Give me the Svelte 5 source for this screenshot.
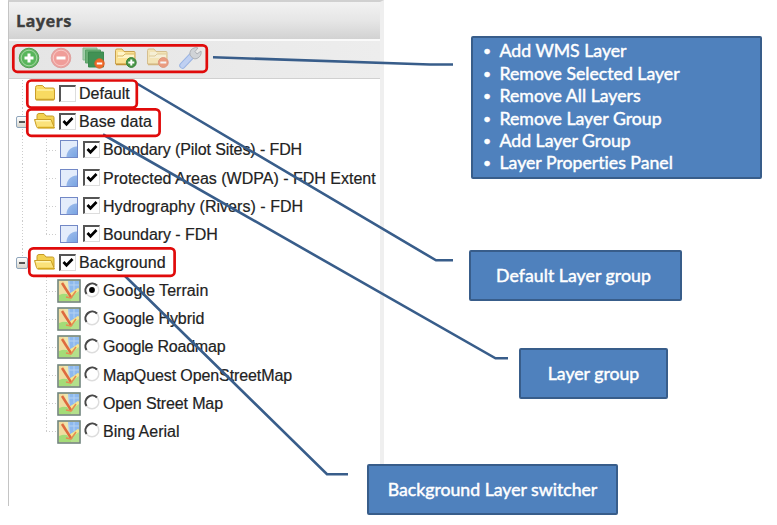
<script>
  const layers = [
    { label: 'Default', kind: 'group', checked: false, spacing: 0 },
    { label: 'Base data', kind: 'group', checked: true, open: true, spacing: 0.1 },
    { label: 'Boundary (Pilot Sites) - FDH', kind: 'layer', checked: true, spacing: -0.1 },
    { label: 'Protected Areas (WDPA) - FDH Extent', kind: 'layer', checked: true, spacing: 0 },
    { label: 'Hydrography (Rivers) - FDH', kind: 'layer', checked: true, spacing: 0.04 },
    { label: 'Boundary - FDH', kind: 'layer', checked: true, last: true, spacing: -0.07 },
    { label: 'Background', kind: 'group', checked: true, open: true, final: true, spacing: 0.15 },
    { label: 'Google Terrain', kind: 'base', checked: true, spacing: 0.05 },
    { label: 'Google Hybrid', kind: 'base', spacing: -0.08 },
    { label: 'Google Roadmap', kind: 'base', spacing: -0.22 },
    { label: 'MapQuest OpenStreetMap', kind: 'base', spacing: -0.1 },
    { label: 'Open Street Map', kind: 'base', spacing: -0.13 },
    { label: 'Bing Aerial', kind: 'base', last: true, spacing: 0 }
  ];
  const tools = ['add', 'remove', 'clear', 'folder-add', 'folder-remove', 'wrench'];
  const actions = ['Add WMS Layer', 'Remove Selected Layer', 'Remove All Layers', 'Remove Layer Group', 'Add Layer Group', 'Layer Properties Panel'];
  const inBackground = (i) => i > 6;
</script>

{#snippet folder(open)}
  <svg class="folder" viewBox="0 0 22 18">
    {#if open}
      <path d="M3 13V3.500Q3 1.500 5 1.500h5l2 2.500h6.500q1.500 0 1.500 1.500V14z" fill="#f3d250" stroke="#c59b28" />
      <path d="M.5 7.500h16.500L20.500 16H4Q3 16 2.500 14.500z" fill="#fbe27a" stroke="#c99d24" />
      <path d="M2 8.700h14.500" stroke="#fff6b8" stroke-width="1.500" />
      <path d="M4 15.500h16" stroke="#d5a91e" stroke-width="1.500" />
    {:else}
      <path d="M1.500 15V3.500Q1.500 1.500 3.500 1.500h5l2.500 2.500h8q1.500 0 1.500 1.500V15q0 1-1.500 1H3q-1.500 0-1.500-1z" fill="#f8da61" stroke="#ca9d2c" />
      <path d="M3 6h16" stroke="#fff0a0" stroke-width="1.500" />
      <path d="M2 15.500h18" stroke="#cba02a" stroke-width="1.500" />
    {/if}
  </svg>
{/snippet}

<main>
  <section class="panel">
    <header>Layers</header>
    <div class="toolbar">
      {#each tools as tool}
        <svg class="tool" viewBox="0 0 24 24">
          {#if tool === 'add' || tool === 'remove'}
            {@const add = tool === 'add'}
            <circle cx="12" cy="12" r="9.800" fill={add ? '#65b765' : '#eda09d'} stroke={add ? '#529d54' : '#dfa19f'} />
            <circle cx="12" cy="12" r="7.800" fill={add ? '#58b65b' : '#f09d99'} stroke={add ? '#a5d6a2' : '#f8c9c5'} />
            <path d={add ? 'M12 7.500v9M7.500 12h9' : 'M7.500 12h9'} stroke="#fff" stroke-width="3" />
          {:else if tool === 'clear'}
            <path d="M1 2h14v12H1z" fill="#a3ceab" stroke="#86b991" />
            <path d="M3.500 4h15v13h-15z" fill="#6aae75" stroke="#5aa067" />
            <path d="M6.500 6h15v15h-15z" fill="#419154" stroke="#3b894d" />
            <circle cx="17.500" cy="17.500" r="4.700" fill="#f26928" stroke="#dc612b" />
            <path d="M14.800 17.500h5.400" stroke="#fff" stroke-width="2" />
          {:else if tool === 'wrench'}
            <path d="M4.500 19.500 14 9.500" stroke="#9ab4e3" stroke-width="6.500" stroke-linecap="round" />
            <path d="M4.500 19.500 13.500 10" stroke="#bfd0f2" stroke-width="4.500" stroke-linecap="round" />
            <path d="M12 9Q11 3 17.500 1.500L20 2l-3 3.500 2 2.500L23 5q1 5-4 7.500-2 1-4.500-.5z" fill="#d0d3d7" stroke="#aeb1b6" />
          {:else}
            {@const add = tool === 'folder-add'}
            <g opacity={add ? 1 : 0.58}>
              <path d="M1.500 18V4.500Q1.500 3 3 3h5l2 2.500h10q1 0 1 1V18z" fill="#fbe294" stroke="#c9a14e" />
              <path d="M4 6h6l2 2h8v4H4z" fill="#fff4c7" />
              <path d="M3 10h6l2-2h9" fill="none" stroke="#d7b662" />
              <path d="M2 18.500h19" stroke="#c49436" stroke-width="1.500" />
              <circle cx="17.300" cy="16.500" r="4.900" fill={add ? '#489547' : '#ed6737'} stroke={add ? '#398238' : '#d65b31'} />
              <path d={add ? 'M17.300 13.500v6M14.300 16.500h6' : 'M14.300 16.500h6'} stroke="#fff" stroke-width="2" />
            </g>
          {/if}
        </svg>
      {/each}
    </div>
    <div class="tree">
      {#each layers as item, i}
        <div class="row {item.kind}">
          <span class="rail" class:hidden={inBackground(i)} class:half={item.final}>
            {#if item.open}<i class="toggle"></i>{/if}
          </span>
          {#if item.kind === 'group'}
            {@render folder(item.open)}
          {:else}
            <span class="branch" class:half={item.last}></span>
            {#if item.kind === 'layer'}
              <i class="polygon"></i>
            {:else}
              <svg class="map" viewBox="0 0 24 24">
                <rect x="1" y="1" width="22" height="22" fill="#eee6ae" />
                <path d="M11 2h11v10l-9 2z" fill="#8db9ee" />
                <path d="M12 2v10M17 2v9M11 6h11" stroke="#b5d2f2" stroke-width="1" />
                <path d="M2 14l8 1 5 7H2z" fill="#a4dc78" />
                <path d="M14 16l8-4v10h-8z" fill="#b4e08b" />
                <path d="M2 2h5l4 11-9 3z" fill="#f0dda0" />
                <path d="M12 17 22 10" stroke="#f5e68f" stroke-width="3" />
                <path d="M5 4 14.500 19" stroke="#de6a3e" stroke-width="2.500" />
                <path d="M19 12 14 19 9 18" fill="none" stroke="#e58b52" stroke-width="1.500" />
                <rect x="1" y="1" width="22" height="22" fill="none" stroke="#71857d" stroke-width="1.600" />
              </svg>
            {/if}
          {/if}
          {#if item.kind === 'base'}
            <svg class="radio" viewBox="0 0 16 16">
              <circle cx="8" cy="8" r="6.800" fill="#fff" stroke="#ddd" stroke-width="1.500" />
              <path d="M2.500 12A6.800 6.800 0 0 1 13 3.500" fill="none" stroke="#484848" stroke-width="2.100" />
              {#if item.checked}<circle cx="8" cy="8" r="2.900" fill="#000" />{/if}
            </svg>
          {:else}
            <span class="check">
              {#if item.checked}<svg viewBox="0 0 12 12"><path d="M1.500 5 4.500 8.200 10.500 2" fill="none" stroke="#000" stroke-width="2.700" /></svg>{/if}
            </span>
          {/if}
          <span class="label" style="letter-spacing: {item.spacing}px">{item.label}</span>
        </div>
      {/each}
    </div>
  </section>

  <svg class="marks" viewBox="0 0 777 525">
    <g fill="none" stroke="#385d8a" stroke-width="2.600">
      <path d="M213 57.300 430 64.500H453" />
      <path d="M136 83 436 260.300H453" />
      <path d="M103 134.500 495.500 358.300H508" />
      <path d="M125 276 327 474.300H348" />
    </g>
    <g fill="none" stroke="#e00b0b" stroke-width="2.700">
      <rect x="13.300" y="45.300" width="193.500" height="26.500" rx="4" />
      <rect x="27.300" y="80.500" width="109.500" height="27" rx="4" />
      <rect x="27.300" y="109.300" width="132.300" height="26.500" rx="4" />
      <rect x="29.300" y="248.300" width="145.300" height="27.500" rx="4" />
    </g>
  </svg>

  <ul class="callout actions">
    {#each actions as action}<li>{action}</li>{/each}
  </ul>
  <div class="callout default">Default Layer group</div>
  <div class="callout group-note">Layer group</div>
  <div class="callout switcher">Background Layer switcher</div>
</main>

<style>
  :global(body) { background: #fff; }
  main { position: relative; width: 777px; height: 525px; overflow: hidden; background: #fff; }
  .panel { box-sizing: border-box; margin-left: 8px; width: 376px; height: 506px; border-left: 1px solid #c4c4c4; border-right: 4px solid #efefef; border-top: 2px solid #d0d0d0; }
  header { height: 37px; box-sizing: border-box; padding: 0 7px; font: bold 16.500px/38px "Open Sans", sans-serif; letter-spacing: 0.250px; -webkit-text-stroke: 0.300px #3e3e3e; color: #3e3e3e; background: linear-gradient(#f2f2f2, #e6e6e6 50%, #d2d2d2); }
  .toolbar { height: 40px; box-sizing: border-box; display: flex; align-items: center; gap: 8.300px; padding: 0 8px 3px; border-top: 2px solid #fafafa; border-bottom: 1.500px solid #d0d0d0; background: linear-gradient(90deg, #e5e5e5, #ededed); }
  .tool { width: 24px; height: 24px; flex: none; }
  .tree { padding-top: 1px; font: 16px "Liberation Sans", Arial, sans-serif; color: #222; }
  .row { height: 28.170px; display: flex; align-items: center; white-space: nowrap; }
  .rail { width: 25px; height: 100%; flex: none; display: flex; align-items: center; padding-left: 7px; box-sizing: border-box; background: repeating-linear-gradient(#ccc 0 1px, transparent 1px 3px) 13px 0 / 1px 100% no-repeat; }
  .rail.half { background-size: 1px 50%; }
  .rail.hidden { background: none; }
  .toggle { box-sizing: border-box; width: 12px; height: 12px; border: 1px solid #8fa5bb; border-radius: 2px; background: linear-gradient(#555, #555) center / 6px 2px no-repeat, linear-gradient(#fff, #d6d5cd); }
  .folder { width: 22px; height: 18px; flex: none; margin: 0 3px 3px 0; }
  .branch { width: 23px; height: 100%; flex: none; background: repeating-linear-gradient(#ccc 0 1px, transparent 1px 3px) 12px 0 / 1px 100% no-repeat, repeating-linear-gradient(90deg, #ccc 0 1px, transparent 1px 3px) 12px 50% / 10px 1px no-repeat; }
  .branch.half { background-size: 1px 50%, 10px 1px; }
  .polygon { box-sizing: border-box; width: 18px; height: 18px; flex: none; margin: 0 5px 2px 3px; border: 1.500px solid #7288c6; background: radial-gradient(circle at 100% 100%, #78a4e2 0, #94b6e9 10px, #e3ecfb 11px); }
  .map { width: 24px; height: 24px; flex: none; margin-right: 3px; }
  .check { box-sizing: border-box; width: 17px; height: 17px; flex: none; margin: 0 3px 2px 0; border: 1px solid #ddd; border-left: 2px solid #555; border-top: 2px solid #555; display: grid; place-items: center; background: #fff; }
  .check svg { width: 12px; height: 12px; }
  .radio { width: 16px; height: 16px; flex: none; margin: 0 3px 3px 0; }
  .label { line-height: 20px; -webkit-text-stroke: 0.200px #222; }
  .marks { position: absolute; inset: 0; width: 777px; height: 525px; }
  .callout { position: absolute; box-sizing: border-box; margin: 0; border: 2.500px solid #385d8a; border-radius: 2px; background: #4f81bd; color: #fff; font: 17.700px Lato, sans-serif; -webkit-text-stroke: 0.450px #fff; font-variant-ligatures: none; display: flex; align-items: center; justify-content: center; white-space: nowrap; }
  .actions { left: 471px; top: 36px; width: 291px; height: 143px; padding: 0 10px; flex-direction: column; align-items: flex-start; list-style: none; }
  .actions li { line-height: 22.400px; display: flex; }
  .actions li::before { content: "•"; width: 16.500px; font-size: 14px; }
  .default { left: 469px; top: 250px; width: 213px; height: 51px; padding-right: 4px; letter-spacing: 0.050px; }
  .group-note { left: 519px; top: 348px; width: 149px; height: 51px; }
  .switcher { left: 367px; top: 464px; width: 251px; height: 51px; }
</style>
